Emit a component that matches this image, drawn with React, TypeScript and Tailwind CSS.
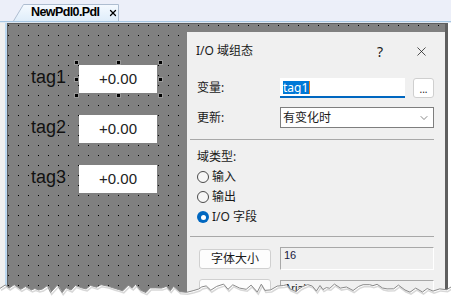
import { X, ChevronDown } from 'lucide-react';

const ui = "font-[family-name:'Noto_Sans','Noto_Sans_CJK_SC',sans-serif]";
const arial = "font-[family-name:'Liberation_Sans',Arial,sans-serif]";

function Tab() {
  return (
    <div className="relative h-[17px] w-[106px]">
      <svg className="absolute inset-0" width="106" height="17">
        <defs>
          <linearGradient id="tabfill" x1="0" y1="0" x2="0" y2="1">
            <stop offset="0" stopColor="#f5faff" />
            <stop offset="1" stopColor="#dfedfa" />
          </linearGradient>
        </defs>
        <path d="M0.5 17 L10.5 0.5 H105.5 V17" fill="url(#tabfill)" stroke="#aebdd0" />
      </svg>
      <div className={`relative flex h-full items-center pl-[18px] gap-[9px] text-[12.5px] font-bold tracking-[-0.6px] text-black ${arial}`}>
        <span>NewPdl0.Pdl</span>
        <X className="w-[10px] h-[10px]" strokeWidth={3} />
      </div>
    </div>
  );
}

function Handle({ className }: { className: string }) {
  return <div className={`absolute w-[5px] h-[5px] bg-black border border-white/60 ${className}`} />;
}

function Canvas() {
  const tags = ['tag1', 'tag2', 'tag3'];
  return (
    <div className={`relative w-[179px] shrink-0 flex flex-col pl-[23px] pt-[41px] gap-[22px] ${arial}`}>
      {tags.map((tag, i) => (
        <div key={tag} className="flex items-center h-[28px]">
          <span className="w-[48px] pb-[3px] text-[18px] text-[#111]">{tag}</span>
          <div className="relative w-[78px] h-[28px] bg-white flex items-center justify-center text-[15px] text-[#222]">
            +0.00
            {i === 0 && (
              <>
                <Handle className="-left-[5px] -top-[5px]" />
                <Handle className="left-[37px] -top-[5px]" />
                <Handle className="left-[79px] -top-[5px]" />
                <Handle className="-left-[5px] top-[12px]" />
                <Handle className="left-[79px] top-[12px]" />
                <Handle className="-left-[5px] top-[28px]" />
                <Handle className="left-[37px] top-[28px]" />
                <Handle className="left-[79px] top-[28px]" />
              </>
            )}
          </div>
        </div>
      ))}
    </div>
  );
}

function Radio({ label, checked }: { label: string; checked?: boolean }) {
  return (
    <div className="flex items-center h-[20px] gap-[3px]">
      {checked ? (
        <span className="w-[12px] h-[12px] rounded-full bg-[#0067c0] flex items-center justify-center">
          <span className="w-[5px] h-[5px] rounded-full bg-white" />
        </span>
      ) : (
        <span className="w-[12px] h-[12px] rounded-full border border-[#4a4a4a] bg-[#f7f7f7]" />
      )}
      <span>{label}</span>
    </div>
  );
}

function Dialog() {
  return (
    <div className={`relative mt-[8px] flex-1 bg-[#f0f0f0] flex flex-col text-[12px] text-[#1a1a1a] ${ui}`}>
      <div className="h-[38px] flex items-center pl-[9px] pr-[16px]">
        <span>I/O 域组态</span>
        <span className="ml-auto mr-[31px] text-[14px]">?</span>
        <X className="w-[15px] h-[15px]" strokeWidth={1.2} />
      </div>
      <div className="flex flex-col pl-[10px] pr-[11px] pt-[8px]">
        <div className="flex items-center h-[20px]">
          <span className="w-[83px]">变量:</span>
          <div className="w-[125px] h-[20px] bg-white border-b-2 border-[#0067c0] flex items-center pl-[3px]">
            <span className="bg-[#0078d7] text-white leading-[13px] pr-[1px]">tag1</span>
            <span className="w-[1px] h-[13px] bg-[#f08020]" />
          </div>
          <div className="ml-auto w-[21px] h-[20px] bg-white border border-[#cfcfcf] rounded-[3px] flex items-end justify-center pb-[3px] text-[10px] leading-[10px]">
            ...
          </div>
        </div>
        <div className="flex items-center h-[21px] mt-[9px]">
          <span className="w-[83px]">更新:</span>
          <div className="flex-1 h-[21px] bg-white border border-[#7e7e7e] flex items-center pl-[2px] pr-[3px]">
            <span>有变化时</span>
            <ChevronDown className="ml-auto w-[12px] h-[12px] text-[#555]" strokeWidth={1.4} />
          </div>
        </div>
        <div className="-ml-[7px] mt-[11px] h-[1px] bg-[#a8a8a8]" />
        <div className="mt-[9px] leading-[16px]">域类型:</div>
        <div className="mt-[2px] flex flex-col">
          <Radio label="输入" />
          <Radio label="输出" />
          <Radio label="I/O 字段" checked />
        </div>
        <div className="-ml-[7px] mt-[9px] h-[1px] bg-[#a8a8a8]" />
        <div className="flex items-center h-[23px] mt-[10px]">
          <div className="ml-[2px] w-[72px] h-[20px] bg-[#fdfdfd] border border-[#d0d0d0] rounded-[3px] flex items-center justify-center">
            字体大小
          </div>
          <div className={`ml-auto w-[154px] h-[23px] border border-[#a8a8a8] border-r-white border-b-white pl-[3px] text-[11px] leading-[14px] text-[#1a1a40] ${arial}`}>
            16
          </div>
        </div>
        <div className="flex items-start h-[23px] mt-[10px]">
          <div className="ml-[2px] w-[72px] h-[20px] mt-[-1px] bg-[#fdfdfd] border border-[#d0d0d0] rounded-[3px]" />
          <div className={`ml-auto w-[154px] h-[23px] border border-[#a8a8a8] border-r-white border-b-white pl-[3px] text-[11px] leading-[14px] ${arial}`}>
            Arial
          </div>
        </div>
      </div>
    </div>
  );
}

function tornPath() {
  let seed = 7;
  const rnd = () => {
    seed = (seed * 9301 + 49297) % 233280;
    return seed / 233280;
  };
  const pts: string[] = [];
  let x = 0;
  while (x < 451) {
    const y = 3 + rnd() * 9;
    pts.push(`${x.toFixed(1)},${y.toFixed(1)}`);
    x += 3 + rnd() * 4;
  }
  pts.push('451,6');
  return pts;
}

function TornEdge() {
  const pts = tornPath();
  const line = 'M' + pts.join(' L');
  return (
    <svg className="absolute left-0 bottom-0" width="451" height="22">
      <path d={line + ' L451,22 L0,22 Z'} fill="#ffffff" />
      <path d={line} transform="translate(1,2)" fill="none" stroke="#d8d8d8" strokeWidth="1.5" />
      <path d={line} fill="none" stroke="#8a8a8a" strokeWidth="1" />
    </svg>
  );
}

export default function App() {
  return (
    <div className="relative w-[451px] h-[303px] overflow-hidden bg-white">
      <div className="h-[21px] bg-[#eceff9] flex items-end pl-[13px]">
        <Tab />
      </div>
      <div className="h-[1px] bg-[#a6c6e2]" />
      <div className="h-[1px] bg-[#dfe8f2]" />
      <div className="flex h-[280px]">
        <div className="w-[5px] bg-[#f0f0f0]" />
        <div className="w-[2px] bg-[#bcd8f0]" />
        <div className="relative flex-1 flex bg-[#808080] border-t border-l border-[#5e5e5e]">
          <svg className="absolute inset-0" width="100%" height="100%">
            <defs>
              <pattern id="dots" width="10" height="10" patternUnits="userSpaceOnUse">
                <rect x="0" y="1" width="1" height="1" fill="#000" />
              </pattern>
            </defs>
            <rect width="100%" height="100%" fill="url(#dots)" />
          </svg>
          <Canvas />
          <Dialog />
        </div>
        <div className="w-[3px] bg-[#5f5f5f]" />
        <div className="w-[3px] bg-white" />
      </div>
      <TornEdge />
    </div>
  );
}
